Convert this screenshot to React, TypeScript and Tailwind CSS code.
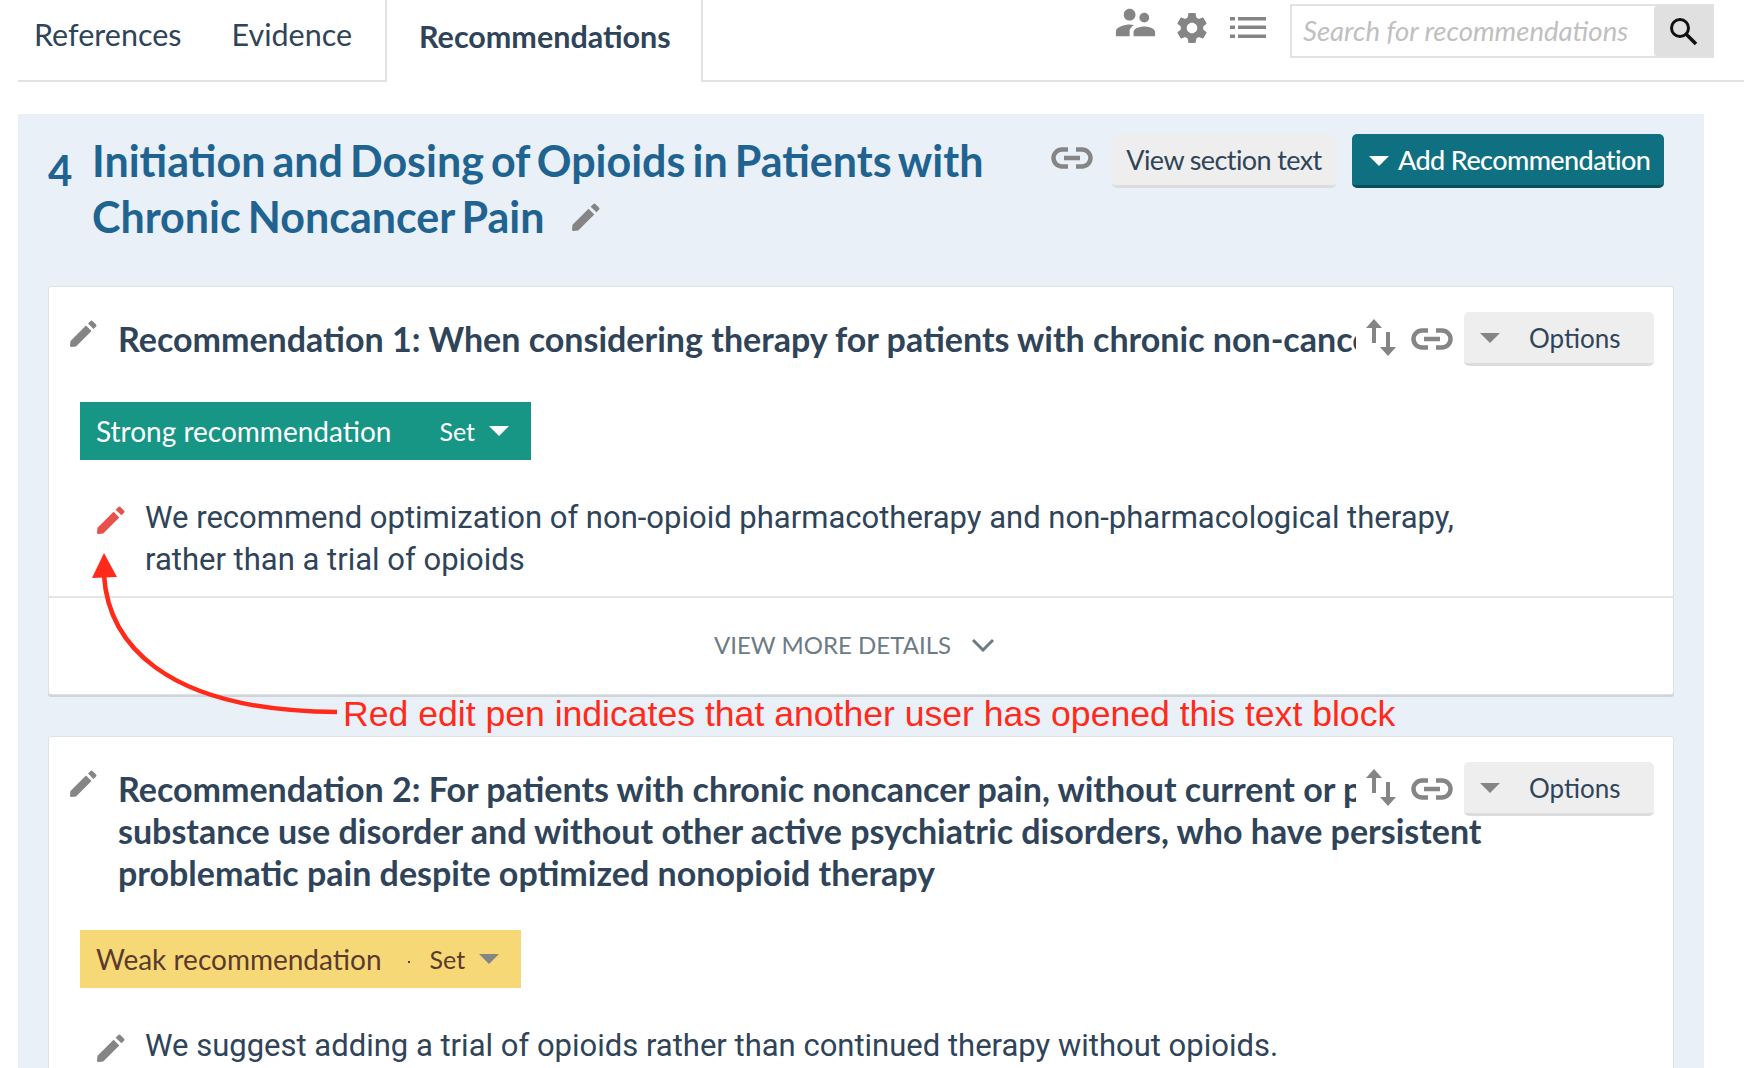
const lato = "font-['Lato',sans-serif]"

const Pencil = ({ color = "#858585", size = 27 }: { color?: string; size?: number }) => (
    <svg width={size} height={size} viewBox="0 0 27 27" fill={color} className="shrink-0">
        <path d="M0.5 21 L16 5.5 L21.5 11 L6 26.5 L1.5 27 Q0 27 0 25.5 Z" />
        <path d="M18 3.5 L20.6 0.9 Q21.5 0 22.5 0.9 L26.1 4.5 Q27 5.5 26.1 6.4 L23.5 9 Z" />
    </svg>
)

const LinkIcon = () => (
    <svg width="42" height="22" viewBox="0 0 42 22" fill="none" stroke="#858585" strokeWidth="4.5" className="shrink-0">
        <path d="M17 2.5 H11 a8.5 8.5 0 0 0 0 17 H17" />
        <path d="M25 2.5 H31 a8.5 8.5 0 0 1 0 17 H25" />
        <path d="M13 11 H29" />
    </svg>
)

const SortIcon = () => (
    <svg width="30" height="38" viewBox="0 0 30 38" fill="#858585" className="shrink-0">
        <path d="M8 0 L16 9 H10 V24 H6 V9 H0 Z" />
        <path d="M22 37 L14 28 H20 V13 H24 V28 H30 Z" />
    </svg>
)

const Caret = ({ color, className = "" }: { color: string; className?: string }) => (
    <svg width="20" height="10" viewBox="0 0 20 10" fill={color} className={`shrink-0 ${className}`}>
        <path d="M0 0 H20 L10 10 Z" />
    </svg>
)

const TopBar = () => (
    <div className="flex h-[82px] pl-[18px]">
        <div className="flex flex-1 border-b-2 border-[#e2e2e2] items-center">
            <div className={`${lato} flex gap-[50px] pl-[16px] text-[30.5px] text-[#2f4459] pb-[11px]`}>
                <span>References</span>
                <span>Evidence</span>
            </div>
        </div>
        <div className={`${lato} w-[318px] shrink-0 border-x-2 border-[#e2e2e2] pl-[32px] pt-[14px] text-[30.5px] font-bold text-[#2f4459]`}>
            Recommendations
        </div>
        <div className="flex w-[1041px] shrink-0 border-b-2 border-[#e2e2e2] pt-[4px] pr-[30px] justify-end">
            <div className="flex items-start">
                <svg width="47" height="47" viewBox="0 0 24 24" fill="#858585" className="mt-[-5px]">
                    <path d="M16.5 12c1.38 0 2.49-1.12 2.49-2.5S17.88 7 16.5 7C15.12 7 14 8.12 14 9.5s1.12 2.5 2.5 2.5zM9 11c1.66 0 3-1.34 3-3s-1.34-3-3-3-3 1.34-3 3 1.34 3 3 3zm7.5 3c-1.83 0-5.5.92-5.5 2.75V19h11v-2.25c0-1.83-3.67-2.75-5.5-2.75zM9 13c-2.33 0-7 1.17-7 3.5V19h7v-2.25c0-.85.33-2.34 2.37-3.47C10.5 13.1 9.66 13 9 13z" />
                </svg>
                <svg width="36" height="36" viewBox="0 0 24 24" fill="#858585" className="ml-[15px] mt-[6px]">
                    <path d="M19.43 12.98c.04-.32.07-.64.07-.98s-.03-.66-.07-.98l2.11-1.65c.19-.15.24-.42.12-.64l-2-3.46c-.12-.22-.39-.3-.61-.22l-2.49 1c-.52-.4-1.08-.73-1.69-.98l-.38-2.65C14.46 2.18 14.25 2 14 2h-4c-.25 0-.46.18-.49.42l-.38 2.65c-.61.25-1.17.59-1.69.98l-2.49-1c-.23-.09-.49 0-.61.22l-2 3.46c-.13.22-.07.49.12.64l2.11 1.65c-.04.32-.07.65-.07.98s.03.66.07.98l-2.11 1.65c-.19.15-.24.42-.12.64l2 3.46c.12.22.39.3.61.22l2.49-1c.52.4 1.08.73 1.69.98l.38 2.65c.03.24.24.42.49.42h4c.25 0 .46-.18.49-.42l.38-2.65c.61-.25 1.17-.59 1.69-.98l2.49 1c.23.09.49 0 .61-.22l2-3.46c.12-.22.07-.49-.12-.64l-2.11-1.65zM12 15.5c-1.93 0-3.5-1.57-3.5-3.5s1.57-3.5 3.5-3.5 3.5 1.57 3.5 3.5-1.57 3.5-3.5 3.5z" />
                </svg>
                <svg width="36" height="21" viewBox="0 0 36 21" fill="#858585" className="ml-[20px] mt-[13px]">
                    <rect x="0" y="0" width="5" height="3.5" />
                    <rect x="8" y="0" width="28" height="3.5" />
                    <rect x="0" y="8.5" width="5" height="3.5" />
                    <rect x="8" y="8.5" width="28" height="3.5" />
                    <rect x="0" y="17.5" width="5" height="3.5" />
                    <rect x="8" y="17.5" width="28" height="3.5" />
                </svg>
                <div className="ml-[24px] flex h-[54px] w-[424px] border-2 border-[#e2e2e2]">
                    <div className={`${lato} flex-1 pl-[11px] text-[27.5px] leading-[50px] italic text-[#c0c0c0]`}>
                        Search for recommendations
                    </div>
                    <div className="flex w-[58px] items-center justify-center bg-[#e0e0e0] rounded-l-[3px]">
                        <svg width="30" height="30" viewBox="0 0 30 30" fill="none" stroke="#111" strokeWidth="3">
                            <circle cx="12" cy="12" r="8.5" />
                            <path d="M18 18 L28 28" strokeWidth="3.5" />
                        </svg>
                    </div>
                </div>
            </div>
        </div>
    </div>
)

const Actions = () => (
    <div className="absolute right-[19px] top-[25px] flex items-center bg-white pl-[10px]">
        <div className="mt-[-2px]"><SortIcon /></div>
        <div className="ml-[15px] mt-[-1px]"><LinkIcon /></div>
        <div className={`${lato} ml-[11px] flex h-[54px] w-[190px] items-center rounded-[5px] border-b-[3px] border-[#dcdcdc] bg-[#eeeeee] pl-[16px] text-[26px] text-[#2f4459]`}>
            <Caret color="#858585" />
            <span className="ml-[29px] mt-[2px]">Options</span>
        </div>
    </div>
)

const Badge = ({ label, bg, fg, caret, dot }: { label: string; bg: string; fg: string; caret: string; dot?: boolean }) => (
    <div className={`${lato} ml-[31px] inline-flex h-[58px] items-center pl-[16px] pr-[22px] text-[28px]`} style={{ background: bg, color: fg }}>
        <span>{label}</span>
        <span className="relative ml-[48px] mt-[2px] text-[25px]">
            {dot && <span className="absolute left-[-22px] top-[20px] h-[2px] w-[2px] bg-[#5b3a2e]" />}
            Set
        </span>
        <Caret color={caret} className="ml-[14px]" />
    </div>
)

const Body = ({ children, pen }: { children: React.ReactNode; pen?: string }) => (
    <div className="mt-[37px] flex pb-[15px] pl-[48px] pr-[40px]">
        <div className="mt-[9px]"><Pencil color={pen} size={28} /></div>
        <p className="ml-[20px] font-['Roboto',sans-serif] text-[31px] leading-[42px] text-[#2f4459]">{children}</p>
    </div>
)

const Card = ({ children }: { children: React.ReactNode }) => (
    <div className="relative rounded-[3px] border border-[#dde2e6] bg-white shadow-[0_2px_0_#cfd4d8]">
        {children}
    </div>
)

const Heading = ({ children }: { children: React.ReactNode }) => (
    <div className="flex min-h-[79px] pl-[21px] pt-[31px] overflow-hidden">
        <div className="mt-[2px]"><Pencil /></div>
        <h3 className={`${lato} ml-[21px] whitespace-nowrap text-[34px] font-bold leading-[42px] text-[#2f4459]`}>{children}</h3>
    </div>
)

export default function App() {
    return (
        <div className="relative h-[1068px] overflow-hidden bg-white">
            <TopBar />
            <div className="ml-[18px] mr-[40px] mt-[32px] h-[954px] bg-[#e9f0f7] px-[30px] pt-[20px]">
                <div className="flex h-[152px]">
                    <div className={`${lato} w-[44px] pt-[8px] text-[42px] font-bold leading-[56px] text-[#1f6391]`}>4</div>
                    <h2 className={`${lato} mt-[-1px] w-[934px] text-[43px] font-bold leading-[56px] [word-spacing:-3.4px] text-[#1f6391]`}>
                        Initiation and Dosing of Opioids in Patients with<br />
                        Chronic Noncancer Pain
                        <span className="ml-[28px] inline-block [vertical-align:2px]"><Pencil size={28} /></span>
                    </h2>
                    <div className="ml-[25px] mt-[13px]"><LinkIcon /></div>
                    <div className={`${lato} ml-[19px] flex h-[54px] w-[224px] items-center justify-center whitespace-nowrap rounded-[5px] border-b-[3px] border-[#dcdcdc] bg-[#eeeeee] pt-[2px] text-[27px] tracking-[-0.6px] text-[#2f4459]`}>
                        View section text
                    </div>
                    <div className={`${lato} ml-[16px] flex h-[54px] w-[312px] items-center whitespace-nowrap rounded-[5px] border-b-[3px] border-[#0a4f5c] bg-[#0e7080] pl-[17px] pt-[2px] text-[27px] tracking-[-0.6px] font-medium text-white`}>
                        <Caret color="#fff" />
                        <span className="ml-[9px]">Add Recommendation</span>
                    </div>
                </div>

                <Card>
                    <Heading>Recommendation 1: When considering therapy for patients with chronic non-cancer pain</Heading>
                    <Actions />
                    <div className="mt-[36px]">
                        <Badge label="Strong recommendation" bg="#179585" fg="#fff" caret="#fff" />
                    </div>
                    <Body pen="#e8504a">
                        We recommend optimization of non-opioid pharmacotherapy and non-pharmacological therapy,<br />
                        rather than a trial of opioids
                    </Body>
                    <div className={`${lato} flex h-[98px] items-center justify-center border-t-2 border-[#e5e5e5] pb-[2px] pr-[13px] text-[24px] text-[#6d7b85]`}>
                        <span>VIEW MORE DETAILS</span>
                        <svg width="24" height="14" viewBox="0 0 24 14" fill="none" stroke="#6d7b85" strokeWidth="3" className="ml-[20px]">
                            <path d="M2 2 L12 12 L22 2" />
                        </svg>
                    </div>
                </Card>

                <div className="mt-[41px]">
                    <Card>
                        <Heading>
                            Recommendation 2: For patients with chronic noncancer pain, without current or past<br />
                            substance use disorder and without other active psychiatric disorders, who have persistent<br />
                            problematic pain despite optimized nonopioid therapy
                        </Heading>
                        <Actions />
                        <div className="mt-[36px]">
                            <Badge label="Weak recommendation" bg="#f6d976" fg="#5b3a2e" caret="#858585" dot />
                        </div>
                        <Body>We suggest adding a trial of opioids rather than continued therapy without opioids.</Body>
                    </Card>
                </div>
            </div>

            {/* annotation */}
            <svg width="350" height="180" viewBox="0 0 350 180" fill="none" className="absolute left-0 top-[545px]">
                <path d="M104 30 C108 95 160 166 337 167" stroke="#ff2a1a" strokeWidth="4.5" />
                <path d="M104 8 L92 33 L117 32 Z" fill="#ff2a1a" />
            </svg>
            <div className="absolute left-[343px] top-[693px] font-['Liberation_Sans',sans-serif] text-[35.6px] leading-[42px] text-[#ff2a1a]">
                Red edit pen indicates that another user has opened this text block
            </div>
        </div>
    )
}
